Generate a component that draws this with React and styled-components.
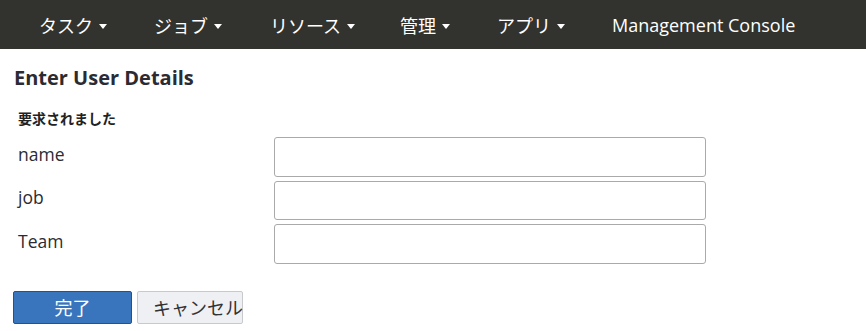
import React from 'react'
import styled, { createGlobalStyle } from 'styled-components'

const GlobalStyle = createGlobalStyle`
  body {
    margin: 0;
    background: #fff;
    font-family: "Open Sans", "Noto Sans CJK JP", sans-serif;
    color: #333;
  }
`

const NavBar = styled.nav`
  height: 49px;
  background: #32332e;
  display: flex;
  align-items: center;
  padding-left: 39px;
`

const NavItem = styled.div`
  color: #fff;
  font-size: 18px;
  display: flex;
  align-items: center;
  gap: 6px;
  width: ${(props) => props.width}px;
  white-space: nowrap;
`

const Caret = styled.span`
  width: 0;
  height: 0;
  border-left: 4px solid transparent;
  border-right: 4px solid transparent;
  border-top: 5px solid #fff;
  margin-top: 3px;
`

const Content = styled.main`
  padding: 15px 13px 0 13px;
`

const Heading = styled.h2`
  margin: 0 0 0 1px;
  font-size: 20px;
  font-weight: 700;
  color: #2b2b33;
  line-height: 28px;
`

const Required = styled.div`
  margin: 18px 0 0 5px;
  font-size: 14px;
  font-weight: 700;
  color: #222;
  line-height: 18px;
`

const FormGrid = styled.div`
  margin-top: 9px;
  display: grid;
  grid-template-columns: 261px 432px;
  row-gap: 4px;
  align-items: center;
`

const Label = styled.label`
  font-size: 17.5px;
  color: #2b2b33;
  padding-left: 5px;
  margin-top: -6px;
`

const Input = styled.input`
  box-sizing: border-box;
  height: 39.5px;
  width: 432px;
  border: 1px solid #aaa;
  border-radius: 3px;
  background: #fff;
  font-family: inherit;
  font-size: 15px;
  outline: none;
`

const Actions = styled.div`
  margin-top: 27px;
  display: flex;
  gap: 5px;
`

const Button = styled.button`
  box-sizing: border-box;
  height: 33px;
  width: ${(props) => props.width}px;
  font-family: "Open Sans", "Noto Sans CJK JP", sans-serif;
  font-size: 18px;
  border-radius: 2px;
  padding: ${(props) => (props.primary ? '0' : '0 0 0 15px')};
  text-align: ${(props) => (props.primary ? 'center' : 'left')};
  white-space: nowrap;
  overflow: visible;
  background: ${(props) => (props.primary ? '#3975bd' : '#eff0f4')};
  color: ${(props) => (props.primary ? '#fff' : '#333')};
  border: 1px solid ${(props) => (props.primary ? '#21548f' : '#c8c9cc')};
`

const menus = [
  { label: 'タスク', width: 115 },
  { label: 'ジョブ', width: 116 },
  { label: 'リソース', width: 130 },
  { label: '管理', width: 97 },
  { label: 'アプリ', width: 115 },
]

function App() {
  return (
    <>
      <GlobalStyle />
      <NavBar>
        {menus.map((m) => (
          <NavItem key={m.label} width={m.width}>
            {m.label}
            <Caret />
          </NavItem>
        ))}
        <NavItem>Management Console</NavItem>
      </NavBar>
      <Content>
        <Heading>Enter User Details</Heading>
        <Required>要求されました</Required>
        <FormGrid>
          <Label>name</Label>
          <Input />
          <Label>job</Label>
          <Input />
          <Label>Team</Label>
          <Input />
        </FormGrid>
        <Actions>
          <Button primary width={119}>完了</Button>
          <Button width={106}>キャンセル</Button>
        </Actions>
      </Content>
    </>
  )
}

export default App
